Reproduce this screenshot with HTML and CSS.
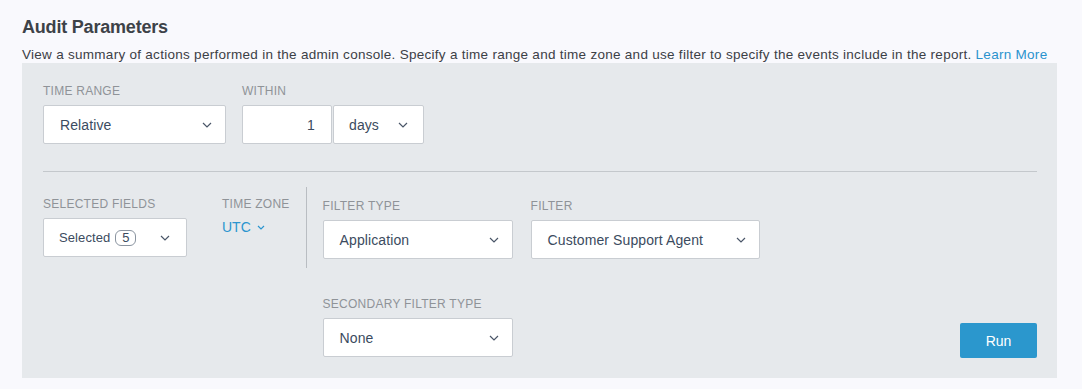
FILE: index.html
```html
<!DOCTYPE html>
<html lang="en">
<head>
  <meta charset="UTF-8" />
  <title>Audit Parameters</title>
  <link rel="stylesheet" href="styles.css">
</head>
<body>

  <h1 class="title">Audit Parameters</h1>
  <p class="desc">View a summary of actions performed in the admin console. Specify a time range and time zone and use filter to specify the events include in the report. <a href="#">Learn More</a></p>

  <div class="panel">
    <div class="row-top">
      <div class="field">
        <div class="label">Time Range</div>
        <div class="select w-range">
          <span>Relative</span>
          <svg class="chev" width="10" height="6" viewBox="0 0 10 6"><path d="M1 1l4 4 4-4" /></svg>
        </div>
      </div>
      <div class="field">
        <div class="label">Within</div>
        <div class="inline">
          <div class="num">1</div>
          <div class="select w-days">
            <span>days</span>
            <svg class="chev" width="10" height="6" viewBox="0 0 10 6"><path d="M1 1l4 4 4-4" /></svg>
          </div>
        </div>
      </div>
    </div>

    <div class="row-bottom">
      <div class="left-group">
        <div class="field">
          <div class="label">Selected Fields</div>
          <div class="select w-fields">
            <span class="sel-text">Selected <span class="badge">5</span></span>
            <svg class="chev" width="10" height="6" viewBox="0 0 10 6"><path d="M1 1l4 4 4-4" /></svg>
          </div>
        </div>
        <div class="field">
          <div class="label">Time Zone</div>
          <a href="#" class="tz">UTC
            <svg width="8" height="5" viewBox="0 0 8 5"><path d="M1 1l3 3 3-3" /></svg>
          </a>
        </div>
      </div>

      <div class="right-group">
        <div class="filters">
          <div class="field">
            <div class="label">Filter Type</div>
            <div class="select w-type">
              <span>Application</span>
              <svg class="chev" width="10" height="6" viewBox="0 0 10 6"><path d="M1 1l4 4 4-4" /></svg>
            </div>
          </div>
          <div class="field">
            <div class="label">Filter</div>
            <div class="select w-filter">
              <span>Customer Support Agent</span>
              <svg class="chev" width="10" height="6" viewBox="0 0 10 6"><path d="M1 1l4 4 4-4" /></svg>
            </div>
          </div>
        </div>
        <div class="secondary">
          <div class="field">
            <div class="label">Secondary Filter Type</div>
            <div class="select w-type">
              <span>None</span>
              <svg class="chev" width="10" height="6" viewBox="0 0 10 6"><path d="M1 1l4 4 4-4" /></svg>
            </div>
          </div>
          <button class="run">Run</button>
        </div>
      </div>
    </div>
  </div>

</body>
</html>
```

FILE: styles.css
```css
* { box-sizing: border-box; margin: 0; padding: 0; font-family: 'Liberation Sans', Arial, sans-serif; }

body {
  background-color: #f9f9fd;
  padding: 16px 25px 0 22px;
  color: #3c4046;
}

.title {
  font-size: 18px;
  line-height: 22px;
  font-weight: bold;
  letter-spacing: -0.2px;
  color: #3d4248;
}

.desc {
  margin-top: 9px;
  font-size: 13.5px;
  line-height: 16px;
  letter-spacing: 0.28px;
  white-space: nowrap;
}

.desc a { color: #2a93cd; text-decoration: none; }

.panel {
  background-color: #e6e9ec;
  padding: 21px 20px 21px 21px;
}

.field { display: flex; flex-direction: column; }

.label {
  font-size: 12px;
  line-height: 14px;
  letter-spacing: 0.25px;
  text-transform: uppercase;
  color: #8f9398;
  margin-bottom: 7px;
}

.row-top {
  display: flex;
  gap: 16px;
  padding-bottom: 27px;
  border-bottom: 1px solid #c4c8cc;
}

.inline { display: flex; gap: 1px; }

.select, .num {
  height: 39px;
  background-color: #fff;
  border: 1px solid #c9cdd2;
  border-radius: 2px;
  font-size: 14px;
  letter-spacing: 0.1px;
  color: #3b4b60;
  display: flex;
  align-items: center;
}

.select {
  justify-content: space-between;
  padding: 0 13px 0 16px;
}

.num {
  justify-content: flex-end;
  padding-right: 16px;
  width: 90px;
}

.chev { fill: none; stroke: #4a5668; stroke-width: 1.2; }

.w-range { width: 183px; }
.w-days { width: 91px; padding-left: 15px; padding-right: 15px; }
.w-fields { width: 144px; padding-left: 15px; padding-right: 16px; }
.w-type { width: 190px; }
.w-filter { width: 229px; }

.sel-text {
  display: flex;
  align-items: center;
  font-size: 13px;
}

.badge {
  display: inline-flex;
  align-items: center;
  justify-content: center;
  width: 21px;
  height: 16px;
  margin-left: 5px;
  border: 1px solid #8a94a0;
  border-radius: 6px;
  font-size: 13px;
}

.row-bottom {
  display: flex;
  align-items: flex-start;
  padding-top: 15px;
}

.left-group {
  display: flex;
  gap: 35px;
  padding: 10px 16px 11px 0;
  border-right: 1px solid #b9bdc2;
}

.tz {
  color: #2b95cf;
  font-size: 14px;
  line-height: 16px;
  text-decoration: none;
  margin-top: 1px;
}

.tz svg { fill: none; stroke: #2b95cf; stroke-width: 1.2; margin-left: 2px; vertical-align: 2px; }

.right-group {
  flex: 1;
  padding: 12px 0 0 16px;
}

.filters { display: flex; gap: 18px; }

.secondary {
  display: flex;
  justify-content: space-between;
  align-items: flex-end;
  margin-top: 38px;
}

.run {
  width: 77px;
  height: 35px;
  margin-bottom: -1px;
  background-color: #2b97cd;
  color: #fff;
  border: none;
  border-radius: 2px;
  font-size: 14px;
  cursor: pointer;
}
```
